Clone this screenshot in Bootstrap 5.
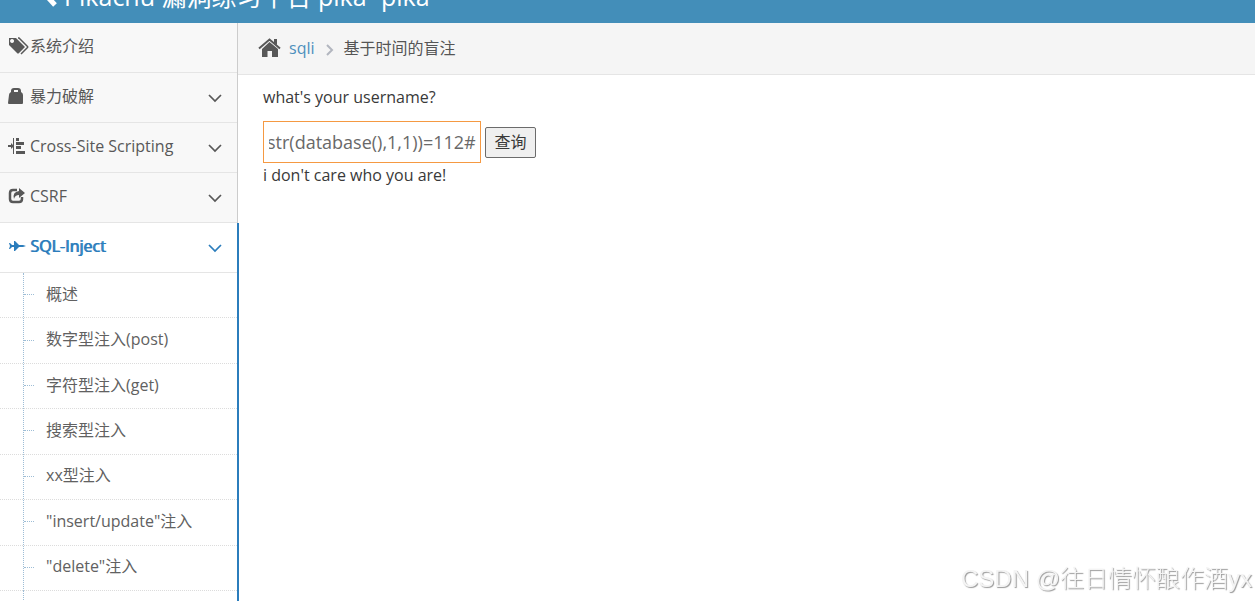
<!DOCTYPE html>
<html lang="zh-CN">
<head>
<meta charset="utf-8">
<meta name="viewport" content="width=device-width, initial-scale=1">
<title>Pikachu</title>
<link rel="stylesheet" href="https://cdn.jsdelivr.net/npm/bootstrap@5.3.0/dist/css/bootstrap.min.css">
<style>
body{font:16px/24px "Open Sans","Noto Sans CJK SC",sans-serif;color:#393939;background:#fff}
a{text-decoration:none}
.topbar{height:23px;background:#438eb9;padding-left:42px}
.topbar a{color:#fff;font-size:25px;line-height:36px;margin-bottom:9px;gap:4px}
.side{width:238px;background:#f2f2f2;border-right:1px solid #ccc}
.side .top-item{height:50px;padding:0 15px 3px 8px;background:#f8f8f8;color:#585858;border-bottom:1px solid #e5e5e5}
.side .top-item .ico{width:22px;height:18px;flex:none}
.side .active-item{background:#fff;color:#2b7dbc}
.bolder{text-shadow:1px 0 0 #2b7dbc}
.open-group{border-right:2px solid #2b7dbc;margin-right:-2px;background:#fff;position:relative}
.submenu{display:grid;grid-template-rows:repeat(7,1fr);height:318px;border-left:1px dotted #9dbdd6;margin-left:23px}
.submenu li{display:flex;align-items:center;margin-left:-24px;border-bottom:1px dotted #dcdcdc}
.submenu a{color:#616161;display:flex;align-items:center;padding-bottom:3px}
.submenu a::before{content:"";width:10px;margin:2px 12px 0 24px;border-top:1px dotted #9dbdd6}
.tail{border-left:1px dotted #9dbdd6;margin-left:23px;height:11px}
.crumbs{height:52px;background:#f5f5f5;border-bottom:1px solid #e5e5e5;padding:0 20px 2px;color:#555}
.crumbs a{color:#4c8fbd}
.content-area{padding:10px 24px 10px 25px}
.query{width:218px;height:42px;padding:5px 4px 6px 5px;border:1px solid #f59942;color:#696969;font-size:18px;outline:0;border-radius:0}
.go{height:31px;width:51px;background:#efefef;border:1px solid #6b6b6b;border-radius:2px;color:#393939;padding:0}
.wm{position:fixed;right:3px;bottom:2px;font:24px/40px "Liberation Sans","Noto Sans CJK SC",sans-serif;font-weight:300;color:#f4f4f4;text-shadow:1px 1px 1px #999}
</style>
</head>
<body class="min-vh-100 d-flex flex-column overflow-hidden">
<header class="topbar d-flex align-items-end overflow-hidden">
<a href="#" class="d-flex align-items-center text-nowrap"><svg width="18" height="24" viewBox="0 0 18 24" fill="none" stroke="#fff" stroke-width="5"><path d="M1 8l12 13"/></svg><span>Pikachu 漏洞练习平台 pika~pika~</span></a>
</header>
<div class="d-flex flex-grow-1">
<nav class="side flex-shrink-0">
<a href="#" class="top-item d-flex align-items-center"><svg class="ico" viewBox="0 0 22 18"><path fill="#585858" fill-rule="evenodd" d="M1 1h7l8 8c1 1 1 1 0 2l-5 5c-1 1-1 1-2 0L1 8zM4 2a2 2 0 1 0 .1 0z"/><path d="M10 1h1l8 8c1 1 1 1 0 2l-6 6" fill="none" stroke="#585858" stroke-width="1.500"/></svg><span>系统介绍</span></a>
<a href="#" class="top-item d-flex align-items-center"><svg class="ico" viewBox="0 0 22 18"><path fill="#585858" d="M1 8q0-2 2-3V4q0-3 3-3h4q3 0 3 3v1q2 1 2 3v8q0 1-1 1H1q-1 0-1-1zM6 5h4V3H6z" fill-rule="evenodd"/></svg><span>暴力破解</span><svg class="ms-auto mt-1" width="14" height="9" viewBox="0 0 14 9" fill="none" stroke="currentColor" stroke-width="1.7"><path d="M1 1l6 6 6-6"/></svg></a>
<a href="#" class="top-item d-flex align-items-center"><svg class="ico" viewBox="0 0 22 18"><path fill="#585858" d="M0 8h3V6l3 3-3 3v-2H0zM5 1h1v16H5zM8 1h3v3H8zM8 5h8v3H8zM8 9h5v3H8zM8 14h9v3H8z"/></svg><span>Cross-Site Scripting</span><svg class="ms-auto mt-1" width="14" height="9" viewBox="0 0 14 9" fill="none" stroke="currentColor" stroke-width="1.7"><path d="M1 1l6 6 6-6"/></svg></a>
<a href="#" class="top-item d-flex align-items-center"><svg class="ico" viewBox="0 0 22 18"><path d="M9 3H5Q2 3 2 6v6q0 3 3 3h6q3 0 3-3v-2" fill="none" stroke="#585858" stroke-width="2.5"/><path fill="#585858" d="M11 1l6 5-6 5V8Q7 8 6 12 4 5 11 4z"/></svg><span>CSRF</span><svg class="ms-auto mt-1" width="14" height="9" viewBox="0 0 14 9" fill="none" stroke="currentColor" stroke-width="1.7"><path d="M1 1l6 6 6-6"/></svg></a>
<div class="open-group">
<a href="#" class="top-item active-item d-flex align-items-center"><svg class="ico" viewBox="0 0 22 18"><path fill="#2b7dbc" d="M1 6h1l2 2h2L6 4h1l4 4h4l3 1-3 1h-4l-4 4H6l0-4H4l-2 2H1l1-3z"/></svg><span class="bolder">SQL-Inject</span><svg class="ms-auto mt-1" width="14" height="9" viewBox="0 0 14 9" fill="none" stroke="currentColor" stroke-width="1.7"><path d="M1 1l6 6 6-6"/></svg></a>
<ul class="submenu list-unstyled mb-0">
<li><a href="#">概述</a></li>
<li><a href="#">数字型注入(post)</a></li>
<li><a href="#">字符型注入(get)</a></li>
<li><a href="#">搜索型注入</a></li>
<li><a href="#">xx型注入</a></li>
<li><a href="#">"insert/update"注入</a></li>
<li><a href="#">"delete"注入</a></li>
</ul>
<div class="tail"></div>
</div>
</nav>
<main class="flex-grow-1">
<div class="crumbs d-flex align-items-center">
<svg class="me-2" width="23" height="20" viewBox="0 0 23 20"><path fill="#585858" d="M11.500 4L20 11v8h-6v-6H9.500v6H4v-8z"/><path d="M1 10.500L11.500 1.500 22 10.500" fill="none" stroke="#585858" stroke-width="2"/><path fill="#585858" d="M16 1h3v6l-3-2z"/></svg>
<a href="#">sqli</a>
<svg class="mx-2 mt-1" width="13" height="12" viewBox="0 0 13 12" fill="none" stroke="#b2b6bf" stroke-width="2"><path d="M4 1l5 5-5 5"/></svg>
<span>基于时间的盲注</span>
</div>
<div class="content-area">
<form onsubmit="return false">
<label for="name" class="d-block mb-2 pb-1">what's your username?</label>
<div class="d-flex align-items-center gap-1">
<input id="name" class="query" type="text" value="kobe' and ascii(substr(database(),1,1))=112#">
<button class="go" type="submit">查询</button>
</div>
</form>
<p class="mb-0">i don't care who you are!</p>
</div>
</main>
</div>
<div class="wm text-nowrap">CSDN @往日情怀酿作酒yx</div>
<script src="https://cdn.jsdelivr.net/npm/bootstrap@5.3.0/dist/js/bootstrap.bundle.min.js"></script>
<script>
// Keep the end of the typed value in view.
const box = document.getElementById('name');
box.scrollLeft = box.scrollWidth;
addEventListener('load', () => { box.scrollLeft = box.scrollWidth; });
</script>
</body>
</html>
